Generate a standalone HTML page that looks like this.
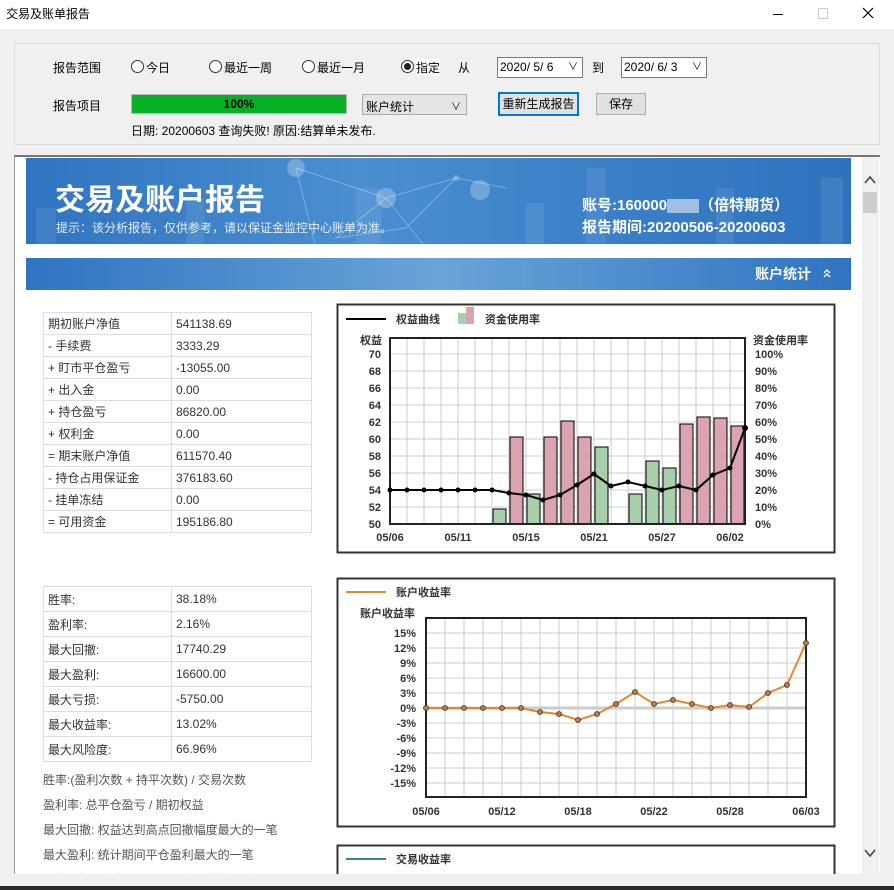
<!DOCTYPE html>
<html><head><meta charset="utf-8"><style>
*{margin:0;padding:0;box-sizing:border-box}
body{width:894px;height:890px;overflow:hidden;background:#f0f0f0;font-family:"Liberation Sans","Noto Sans CJK SC",sans-serif;font-size:12px;color:#000;position:relative}
.a{position:absolute;white-space:nowrap}
.rad{position:absolute;width:13px;height:13px;border:1px solid #333;border-radius:50%;background:#fff}
.dt{position:absolute;height:21px;border:1px solid #7a7a7a;background:#fff;font-size:12px;padding:3px 2px;line-height:13px}
table{border-collapse:collapse;position:absolute}
td{border:1px solid #ddd;color:#333;font-size:12px;padding:0 4px}
.n{position:absolute;color:#555;font-size:12px;left:43px}
</style></head><body>
<div class="a" style="left:0;top:0;width:894px;height:29px;background:#fff"></div>
<div class="a" style="left:6px;top:5px;font-size:12px">交易及账单报告</div>
<div class="a" style="left:773px;top:14px;width:10px;height:1px;background:#000"></div>
<div class="a" style="left:818px;top:8px;width:10px;height:11px;border:1px solid #ccc"></div>
<svg class="a" style="left:862px;top:7px" width="12" height="12"><path d="M1 1L11 11M11 1L1 11" stroke="#000" stroke-width="1.2"/></svg>
<div class="a" style="left:14px;top:43px;width:866px;height:102px;border:1px solid #dcdcdc"></div>
<div class="a" style="left:53px;top:59px">报告范围</div>
<div class="rad" style="left:131px;top:60px"></div><div class="a" style="left:146px;top:59px">今日</div>
<div class="rad" style="left:209px;top:60px"></div><div class="a" style="left:224px;top:59px">最近一周</div>
<div class="rad" style="left:302px;top:60px"></div><div class="a" style="left:317px;top:59px">最近一月</div>
<div class="rad" style="left:401px;top:60px"></div><div class="a" style="left:404px;top:63px;width:7px;height:7px;border-radius:50%;background:#222"></div><div class="a" style="left:416px;top:59px;background:#fff">指定</div>
<div class="a" style="left:458px;top:59px">从</div>
<div class="dt" style="left:497px;top:57px;width:86px">2020/ 5/ 6 <span style="position:absolute;right:4px;font-size:10px">∨</span></div>
<div class="a" style="left:592px;top:59px">到</div>
<div class="dt" style="left:621px;top:57px;width:86px">2020/ 6/ 3 <span style="position:absolute;right:4px;font-size:10px">∨</span></div>
<div class="a" style="left:53px;top:97px">报告项目</div>
<div class="a" style="left:131px;top:94px;width:216px;height:20px;background:#06b025;border:1px solid #bbb;text-align:center;font-weight:bold;line-height:18px">100%</div>
<div class="a" style="left:362px;top:94px;width:105px;height:21px;border:1px solid #aaa;background:#e5e5e5;padding:3px 3px">账户统计<span style="position:absolute;right:5px;font-size:10px">∨</span></div>
<div class="a" style="left:498px;top:92px;width:81px;height:24px;border:2px solid #0078d7;background:#e1e1e1;text-align:center;line-height:20px">重新生成报告</div>
<div class="a" style="left:596px;top:93px;width:50px;height:22px;border:1px solid #adadad;background:#e1e1e1;text-align:center;line-height:20px">保存</div>
<div class="a" style="left:131px;top:122px">日期: 20200603 查询失败! 原因:结算单未发布.</div>

<div class="a" style="left:14px;top:155px;width:866px;height:720px;background:#fff;border-top:2px solid #777;border-left:1px solid #999"></div>
<div class="a" style="left:862px;top:157px;width:17px;height:718px;background:#f0f0f0"></div>
<svg class="a" style="left:864px;top:175px" width="12" height="10"><path d="M1 8L6 2L11 8" stroke="#444" stroke-width="1.6" fill="none"/></svg>
<div class="a" style="left:863px;top:192px;width:14px;height:21px;background:#cdcdcd"></div>
<svg class="a" style="left:864px;top:848px" width="12" height="10"><path d="M1 2L6 8L11 2" stroke="#444" stroke-width="1.6" fill="none"/></svg>

<div class="a" style="left:26px;top:158px;width:825px;height:86px;background:linear-gradient(90deg,#2f74c0,#4a8fd0 40%,#3a80c8 70%,#2e72bd);overflow:hidden">
<svg width="825" height="86" style="position:absolute;left:0;top:0"><g fill="#fff" opacity="0.08"><rect x="10" y="50" width="20" height="36"/><rect x="160" y="40" width="18" height="46"/><rect x="330" y="30" width="25" height="56"/><rect x="500" y="45" width="18" height="41"/><rect x="560" y="10" width="20" height="76"/><rect x="690" y="30" width="18" height="56"/><rect x="795" y="20" width="22" height="66"/></g><g stroke="#fff" stroke-opacity="0.3" fill="none"><path d="M270 10L360 40 430 20 480 30M270 10L290 90M360 40L310 80 380 70 430 20M360 40L400 90"/></g><g fill="#fff" opacity="0.25"><circle cx="270" cy="10" r="9"/><circle cx="360" cy="40" r="10"/><circle cx="454" cy="32" r="10"/><circle cx="430" cy="20" r="3"/></g></svg>
<div class="a" style="left:29px;top:17px;color:#fff;font-size:30px;font-weight:bold">交易及账户报告</div>
<div class="a" style="left:30px;top:61px;color:#e6eefa;font-size:12px">提示：该分析报告，仅供参考，请以保证金监控中心账单为准。</div>
<div class="a" style="left:556px;top:36px;color:#fff;font-size:15px;font-weight:bold">账号:160000<span style="display:inline-block;width:32px;height:14px;background:#9fbfe3;vertical-align:middle"></span>（倍特期货）</div>
<div class="a" style="left:556px;top:58px;color:#fff;font-size:15px;font-weight:bold">报告期间:20200506-20200603</div>
</div>
<div class="a" style="left:26px;top:258px;width:825px;height:32px;background:linear-gradient(90deg,#2e74c2,#6aa4d8 50%,#2e74c2)"></div>
<div class="a" style="left:755px;top:264px;color:#fff;font-size:14px;font-weight:bold">账户统计</div>
<svg class="a" style="left:822px;top:268px" width="10" height="10"><path d="M2 5L5 2L8 5M2 9L5 6L8 9" stroke="#fff" stroke-width="1.4" fill="none"/></svg>

<table style="left:43px;top:312px;width:269px">
<tr style="height:22px"><td style="width:128px">期初账户净值</td><td>541138.69</td></tr>
<tr style="height:22px"><td>- 手续费</td><td>3333.29</td></tr>
<tr style="height:22px"><td>+ 盯市平仓盈亏</td><td>-13055.00</td></tr>
<tr style="height:22px"><td>+ 出入金</td><td>0.00</td></tr>
<tr style="height:22px"><td>+ 持仓盈亏</td><td>86820.00</td></tr>
<tr style="height:22px"><td>+ 权利金</td><td>0.00</td></tr>
<tr style="height:22px"><td>= 期末账户净值</td><td>611570.40</td></tr>
<tr style="height:22px"><td>- 持仓占用保证金</td><td>376183.60</td></tr>
<tr style="height:22px"><td>- 挂单冻结</td><td>0.00</td></tr>
<tr style="height:22px"><td>= 可用资金</td><td>195186.80</td></tr>
</table>
<table style="left:43px;top:586px;width:269px">
<tr style="height:25px"><td style="width:128px">胜率:</td><td>38.18%</td></tr>
<tr style="height:25px"><td>盈利率:</td><td>2.16%</td></tr>
<tr style="height:25px"><td>最大回撤:</td><td>17740.29</td></tr>
<tr style="height:25px"><td>最大盈利:</td><td>16600.00</td></tr>
<tr style="height:25px"><td>最大亏损:</td><td>-5750.00</td></tr>
<tr style="height:25px"><td>最大收益率:</td><td>13.02%</td></tr>
<tr style="height:25px"><td>最大风险度:</td><td>66.96%</td></tr>
</table>
<div class="n" style="top:771px">胜率:(盈利次数 + 持平次数) / 交易次数</div>
<div class="n" style="top:796px">盈利率: 总平仓盈亏 / 期初权益</div>
<div class="n" style="top:821px">最大回撤: 权益达到高点回撤幅度最大的一笔</div>
<div class="n" style="top:846px">最大盈利: 统计期间平仓盈利最大的一笔</div>
<div class="n" style="top:871px;height:3px;overflow:hidden">最大亏损: 统计期间平仓亏损最大的一笔</div>

<svg class="a" style="left:0;top:0" width="894" height="874" font-family="Liberation Sans,Noto Sans CJK SC,sans-serif" font-size="11" font-weight="bold" fill="#333">
<rect x="337.5" y="304.5" width="497" height="248" fill="#fff" stroke="#333" stroke-width="2"/>
<line x1="346" y1="319" x2="386" y2="319" stroke="#000" stroke-width="2"/>
<text x="396" y="323">权益曲线</text>
<rect x="458" y="313" width="8" height="11" fill="#a7cfaa"/><rect x="466" y="307" width="8" height="17" fill="#d9a3b0"/>
<text x="485" y="323">资金使用率</text>
<text x="360" y="344">权益</text><text x="753" y="344">资金使用率</text>
<g stroke="#ccc" stroke-width="1">
<path d="M407 338V524M424 338V524M441 338V524M458 338V524M475 338V524M492 338V524M509 338V524M526 338V524M543 338V524M560 338V524M577 338V524M594 338V524M611 338V524M628 338V524M645 338V524M662 338V524M679 338V524M696 338V524M713 338V524M730 338V524"/>
<path d="M390 354H745M390 371H745M390 388H745M390 405H745M390 422H745M390 439H745M390 456H745M390 473H745M390 490H745M390 507H745"/>
</g>
<g fill="#d9a3b0" stroke="#000" stroke-width="1">
<rect x="510" y="437" width="13" height="87"/><rect x="544" y="437" width="13" height="87"/><rect x="561" y="421" width="13" height="103"/><rect x="578" y="437" width="13" height="87"/><rect x="680" y="424" width="13" height="100"/><rect x="697" y="417" width="13" height="107"/><rect x="714" y="418" width="13" height="106"/><rect x="731" y="426" width="13" height="98"/>
</g>
<g fill="#a7cfaa" stroke="#000" stroke-width="1">
<rect x="493" y="509" width="13" height="15"/><rect x="527" y="494" width="13" height="30"/><rect x="595" y="447" width="13" height="77"/><rect x="629" y="494" width="13" height="30"/><rect x="646" y="461" width="13" height="63"/><rect x="663" y="468" width="13" height="56"/>
</g>
<rect x="390" y="338" width="355" height="186" fill="none" stroke="#222" stroke-width="2"/>
<polyline fill="none" stroke="#000" stroke-width="2" points="390,490 407,490 424,490 441,490 458,490 475,490 492,490 509,493 526,495 543,500 560,495 577,485 594,474 611,486 628,482 645,486 662,490 679,486 696,490 713,475 730,468 745,428"/>
<g fill="#000"><circle cx="390" cy="490" r="2.5"/><circle cx="407" cy="490" r="2.5"/><circle cx="424" cy="490" r="2.5"/><circle cx="441" cy="490" r="2.5"/><circle cx="458" cy="490" r="2.5"/><circle cx="475" cy="490" r="2.5"/><circle cx="492" cy="490" r="2.5"/><circle cx="509" cy="493" r="2.5"/><circle cx="526" cy="495" r="2.5"/><circle cx="543" cy="500" r="2.5"/><circle cx="560" cy="495" r="2.5"/><circle cx="577" cy="485" r="2.5"/><circle cx="594" cy="474" r="2.5"/><circle cx="611" cy="486" r="2.5"/><circle cx="628" cy="482" r="2.5"/><circle cx="645" cy="486" r="2.5"/><circle cx="662" cy="490" r="2.5"/><circle cx="679" cy="486" r="2.5"/><circle cx="696" cy="490" r="2.5"/><circle cx="713" cy="475" r="2.5"/><circle cx="730" cy="468" r="2.5"/><circle cx="745" cy="428" r="3"/></g>
<g text-anchor="end"><text x="381" y="358">70</text><text x="381" y="375">68</text><text x="381" y="392">66</text><text x="381" y="409">64</text><text x="381" y="426">62</text><text x="381" y="443">60</text><text x="381" y="460">58</text><text x="381" y="477">56</text><text x="381" y="494">54</text><text x="381" y="511">52</text><text x="381" y="528">50</text></g>
<g><text x="755" y="358">100%</text><text x="755" y="375">90%</text><text x="755" y="392">80%</text><text x="755" y="409">70%</text><text x="755" y="426">60%</text><text x="755" y="443">50%</text><text x="755" y="460">40%</text><text x="755" y="477">30%</text><text x="755" y="494">20%</text><text x="755" y="511">10%</text><text x="755" y="528">0%</text></g>
<g text-anchor="middle"><text x="390" y="541">05/06</text><text x="458" y="541">05/11</text><text x="526" y="541">05/15</text><text x="594" y="541">05/21</text><text x="662" y="541">05/27</text><text x="730" y="541">06/02</text></g>

<rect x="337.5" y="578.5" width="497" height="248" fill="#fff" stroke="#333" stroke-width="2"/>
<line x1="346" y1="592" x2="386" y2="592" stroke="#e8862a" stroke-width="2"/>
<text x="396" y="596">账户收益率</text>
<text x="360" y="617">账户收益率</text>
<g stroke="#ccc"><path d="M445 618V797M464 618V797M483 618V797M502 618V797M521 618V797M540 618V797M559 618V797M578 618V797M597 618V797M616 618V797M635 618V797M654 618V797M673 618V797M692 618V797M711 618V797M730 618V797M749 618V797M768 618V797M787 618V797"/>
<path d="M426 633H806M426 648H806M426 663H806M426 678H806M426 693H806M426 723H806M426 738H806M426 753H806M426 768H806M426 783H806"/></g>
<line x1="426" y1="708" x2="806" y2="708" stroke="#ccc" stroke-width="3"/>
<rect x="426" y="618" width="380" height="179" fill="none" stroke="#222" stroke-width="2"/>
<polyline fill="none" stroke="#e8862a" stroke-width="2" points="426,708 445,708 464,708 483,708 502,708 521,708 540,712 559,714 578,720 597,714 616,704 635,692 654,704 673,700 692,704 711,708 730,705 749,707 768,693 787,685 806,643"/>
<g fill="#c87a3a" stroke="#333" stroke-width="0.8"><circle cx="426" cy="708" r="2.5"/><circle cx="445" cy="708" r="2.5"/><circle cx="464" cy="708" r="2.5"/><circle cx="483" cy="708" r="2.5"/><circle cx="502" cy="708" r="2.5"/><circle cx="521" cy="708" r="2.5"/><circle cx="540" cy="712" r="2.5"/><circle cx="559" cy="714" r="2.5"/><circle cx="578" cy="720" r="2.5"/><circle cx="597" cy="714" r="2.5"/><circle cx="616" cy="704" r="2.5"/><circle cx="635" cy="692" r="2.5"/><circle cx="654" cy="704" r="2.5"/><circle cx="673" cy="700" r="2.5"/><circle cx="692" cy="704" r="2.5"/><circle cx="711" cy="708" r="2.5"/><circle cx="730" cy="705" r="2.5"/><circle cx="749" cy="707" r="2.5"/><circle cx="768" cy="693" r="2.5"/><circle cx="787" cy="685" r="2.5"/><circle cx="806" cy="643" r="2.5"/></g>
<g text-anchor="end"><text x="416" y="637">15%</text><text x="416" y="652">12%</text><text x="416" y="667">9%</text><text x="416" y="682">6%</text><text x="416" y="697">3%</text><text x="416" y="712">0%</text><text x="416" y="727">-3%</text><text x="416" y="742">-6%</text><text x="416" y="757">-9%</text><text x="416" y="772">-12%</text><text x="416" y="787">-15%</text></g>
<g text-anchor="middle"><text x="426" y="815">05/06</text><text x="502" y="815">05/12</text><text x="578" y="815">05/18</text><text x="654" y="815">05/22</text><text x="730" y="815">05/28</text><text x="806" y="815">06/03</text></g>

<rect x="337.5" y="845.5" width="497" height="40" fill="#fff" stroke="#333" stroke-width="2"/>
<line x1="346" y1="859" x2="386" y2="859" stroke="#3c7fa8" stroke-width="2"/>
<text x="396" y="863">交易收益率</text>
</svg>
<div class="a" style="left:0;top:874px;width:894px;height:12px;background:#f0f0f0"></div>
<div class="a" style="left:0;top:886px;width:894px;height:4px;background:#2b2b2b"></div>
</body></html>
